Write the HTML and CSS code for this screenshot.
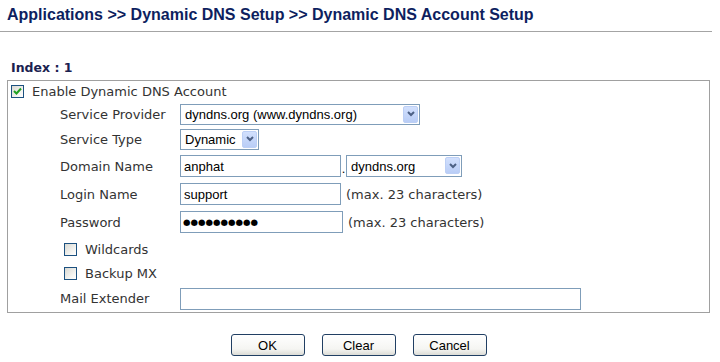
FILE: index.html
```html
<!DOCTYPE html>
<html>

<head>
    <link rel="stylesheet" href="styles.css">
</head>

<body>
    <div id="page">
        <h1 class="title">Applications &gt;&gt; Dynamic DNS Setup &gt;&gt; Dynamic DNS Account Setup</h1>
        <div class="index">Index : 1</div>

        <div class="panel">
            <div class="row row-enable">
                <span class="check checked">
                    <svg width="9" height="9" viewBox="0 0 9 9"><polyline points="1,4 3.5,6.5 8,1.5" fill="none" stroke="#21a121" stroke-width="2"/></svg>
                </span>
                <span>Enable Dynamic DNS Account</span>
            </div>

            <div class="row row-provider">
                <span class="label">Service Provider</span>
                <div class="field">
                    <span class="select w-provider">
                        <select><option>dyndns.org (www.dyndns.org)</option></select>
                        <span class="arrow"><svg width="8" height="6" viewBox="0 0 8 6"><polyline points="1,1 4,4 7,1" fill="none" stroke="#4d6185" stroke-width="2"/></svg></span>
                    </span>
                </div>
            </div>

            <div class="row row-type">
                <span class="label">Service Type</span>
                <div class="field">
                    <span class="select w-type">
                        <select><option>Dynamic</option></select>
                        <span class="arrow"><svg width="8" height="6" viewBox="0 0 8 6"><polyline points="1,1 4,4 7,1" fill="none" stroke="#4d6185" stroke-width="2"/></svg></span>
                    </span>
                </div>
            </div>

            <div class="row row-domain">
                <span class="label">Domain Name</span>
                <div class="field">
                    <input class="text w-short" type="text" value="anphat">
                    <span class="dot">.</span>
                    <span class="select w-domain">
                        <select><option>dyndns.org</option></select>
                        <span class="arrow"><svg width="8" height="6" viewBox="0 0 8 6"><polyline points="1,1 4,4 7,1" fill="none" stroke="#4d6185" stroke-width="2"/></svg></span>
                    </span>
                </div>
            </div>

            <div class="row row-login">
                <span class="label">Login Name</span>
                <div class="field">
                    <input class="text w-short" type="text" value="support">
                    <span class="hint">(max. 23 characters)</span>
                </div>
            </div>

            <div class="row row-password">
                <span class="label">Password</span>
                <div class="field">
                    <input class="text password w-pass" type="text" value="●●●●●●●●●●">
                    <span class="hint">(max. 23 characters)</span>
                </div>
            </div>

            <div class="row row-wild">
                <span class="option"><span class="check"></span><span>Wildcards</span></span>
            </div>

            <div class="row row-backup">
                <span class="option"><span class="check"></span><span>Backup MX</span></span>
            </div>

            <div class="row row-mail">
                <span class="label">Mail Extender</span>
                <div class="field">
                    <input class="text w-long" type="text" value="">
                </div>
            </div>
        </div>

        <div class="actions">
            <button>OK</button>
            <button>Clear</button>
            <button>Cancel</button>
        </div>
    </div>
</body>

</html>
```

FILE: styles.css
```css
body {
    margin: 0;
    background-color: #fff;
}

#page {
    font-family: 'DejaVu Sans', Verdana, sans-serif;
    font-size: 13px;
    color: #333;
}

.title {
    margin: 0 8px 0 0;
    padding: 5px 0 0 7px;
    height: 26px;
    box-sizing: content-box;
    font-family: 'Liberation Sans', Arial, sans-serif;
    font-size: 16px;
    line-height: 19px;
    font-weight: bold;
    color: #0e1f5f;
    border-bottom: 1px solid #a4a4a4;
}

.index {
    margin: 28px 0 0 11px;
    height: 20px;
    line-height: 15px;
    font-size: 12.5px;
    font-weight: bold;
    color: #1a2150;
}

.panel {
    margin-left: 7px;
    width: 701px;
    border: 1px solid #a0a0a0;
}

.row {
    display: grid;
    grid-template-columns: 172px 1fr;
    align-items: center;
}

.row .label {
    padding-left: 52px;
}

.field {
    display: flex;
    align-items: center;
}

.row-enable {
    display: flex;
    height: 21px;
    padding-left: 3px;
    gap: 8px;
}

.row-provider { height: 24px; }
.row-type { height: 26px; }
.row-domain { height: 28px; }
.row-login { height: 28px; }
.row-password { height: 28px; }
.row-wild { height: 26px; }
.row-backup { height: 23px; }
.row-mail { height: 27px; }

.option {
    display: flex;
    align-items: center;
    gap: 8px;
    padding-left: 56px;
    grid-column: 1 / 3;
}

.check {
    display: inline-flex;
    align-items: center;
    justify-content: center;
    width: 11px;
    height: 11px;
    border: 1px solid #1c5180;
    background: linear-gradient(135deg, #d8d8d2, #f6f6f3 70%, #fff);
}

.text, .select select {
    box-sizing: border-box;
    margin: 0;
    height: 22px;
    border: 1px solid #7f9db9;
    font-family: 'Liberation Sans', Arial, sans-serif;
    font-size: 13px;
    color: #000;
    background: #fff;
    padding: 0 3px;
    outline: none;
}

.password {
    font-family: 'DejaVu Sans', sans-serif;
    font-size: 8.6px;
    padding-left: 2px;
}

.select {
    position: relative;
    display: inline-block;
}

.select select {
    width: 100%;
    height: 21px;
    appearance: none;
    -webkit-appearance: none;
    padding-left: 4px;
}

.select .arrow {
    position: absolute;
    top: 2px;
    right: 2px;
    width: 15px;
    height: 17px;
    box-sizing: border-box;
    display: flex;
    align-items: center;
    justify-content: center;
    border: 1px solid #bccff5;
    border-radius: 2px;
    background: linear-gradient(#d2e0fd, #b9cdf6);
}

.w-provider { width: 240px; }
.w-type { width: 79px; }
.w-domain { width: 116px; }
.w-short { width: 161px; }
.w-pass { width: 163px; }
.w-long { width: 401px; }

.row-domain .select select,
.row-domain .text {
    height: 22px;
}

.dot {
    width: 5px;
    text-align: center;
    color: #000;
    font-family: 'Liberation Sans', Arial, sans-serif;
    padding-top: 4px;
}

.hint {
    margin-left: 5px;
}

.actions {
    margin: 21px 0 0 7px;
    width: 703px;
    display: flex;
    justify-content: center;
    gap: 17px;
}

.actions button {
    width: 74px;
    height: 22px;
    padding: 0;
    border: 1px solid #213f63;
    border-radius: 3px;
    background: linear-gradient(#ffffff, #f5f5f2 70%, #dcdcd6);
    font-family: 'Liberation Sans', Arial, sans-serif;
    font-size: 13px;
    color: #000;
}
```
